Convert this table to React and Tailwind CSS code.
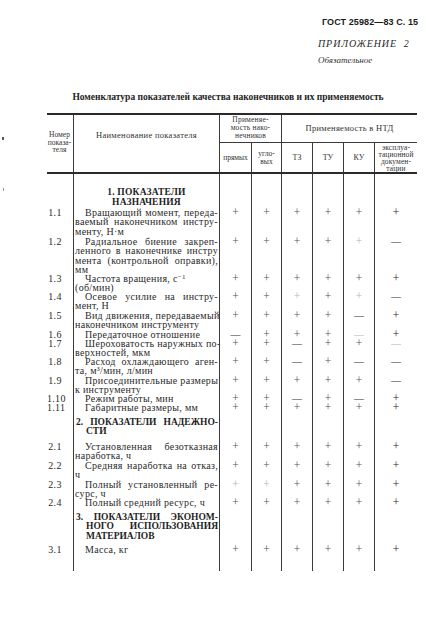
const GRID = 'grid grid-cols-[26px_146px_32px_30px_31px_31px_31px_43px]'

// marks: '+' plus, '-' dash, 'p' faint plus, 'q' faint dash
// nj: index of a line that is not justified although it is not the last one
const ROWS = [
  { sec: 'center', h: 'h-[34px]', pt: 'pt-[13px]', lines: ['1. ПОКАЗАТЕЛИ', 'НАЗНАЧЕНИЯ'] },
  { n: '1.1', h: 'h-[29px]', m: '++++++', lines: ['Вращающий момент, переда-', 'ваемый наконечником инстру-', 'менту, Н·м'] },
  { n: '1.2', h: 'h-[37px]', m: '++++p-', lines: ['Радиальное биение закреп-', 'ленного в наконечнике инстру', 'мента (контрольной оправки),', 'мм'] },
  { n: '1.3', h: 'h-[18px]', m: '++++++', nj: 0, lines: [<>Частота вращения, с<span className="relative -top-[3px] text-[7px] leading-[0px]">−1</span></>, '(об/мин)'] },
  { n: '1.4', h: 'h-[19px]', m: '++p+p-', lines: ['Осевое усилие на инстру-', 'мент, Н'] },
  { n: '1.5', h: 'h-[19px]', m: '++++-+', lines: ['Вид движения, передаваемый', 'наконечником инструменту'] },
  { n: '1.6', h: 'h-[9px]', m: '-+++q+', lines: ['Передаточное отношение'] },
  { n: '1.7', h: 'h-[18px]', m: '++-++q', lines: ['Шероховатость наружных по-', 'верхностей, мкм'] },
  { n: '1.8', h: 'h-[19px]', m: '++-+--', lines: ['Расход охлаждающего аген-', 'та, м³/мин, л/мин'] },
  { n: '1.9', h: 'h-[18px]', m: '+++++-', lines: ['Присоединительные размеры', 'к инструменту'] },
  { n: '1.10', h: 'h-[9px]', m: '++-+-+', lines: ['Режим работы, мин'] },
  { n: '1.11', h: 'h-[14px]', m: '++++++', lines: ['Габаритные размеры, мм'] },
  { sec: 'left', h: 'h-[25px]', pt: 'pt-[1px]', lines: ['2. ПОКАЗАТЕЛИ НАДЕЖНО-', 'СТИ'] },
  { n: '2.1', h: 'h-[19px]', m: '++++++', lines: ['Установленная безотказная', 'наработка, ч'] },
  { n: '2.2', h: 'h-[19px]', m: '++++++', lines: ['Средняя наработка на отказ,', 'ч'] },
  { n: '2.3', h: 'h-[18px]', m: 'pp++++', lines: ['Полный установленный ре-', 'сурс, ч'] },
  { n: '2.4', h: 'h-[14px]', m: '++++++', lines: ['Полный средний ресурс, ч'] },
  { sec: 'left', h: 'h-[33px]', pt: 'pt-[1px]', lines: ['3. ПОКАЗАТЕЛИ ЭКОНОМ-', 'НОГО ИСПОЛЬЗОВАНИЯ', 'МАТЕРИАЛОВ'] },
  { n: '3.1', h: 'h-[26px]', m: '++++++', lines: ['Масса, кг'] },
]

function Mark({ c, last }) {
  if (c === '+' || c === 'p') {
    return (
      <span className={`text-[11.5px] leading-[9px] ${c === 'p' ? 'text-[#b5b5b5]' : last ? 'text-[#222]' : 'text-[#555]'}`}>+</span>
    )
  }
  return (
    <span className={`text-[10px] leading-[9px] ${c === 'q' ? 'text-[#b5b5b5]' : 'text-[#333]'}`}>—</span>
  )
}

function NameCell({ row }) {
  const { lines, sec } = row
  if (sec === 'center') {
    return (
      <div className={`border-l border-[#3a3a3a] ${row.pt} text-center font-bold text-[9.5px] leading-[10px] tracking-[0.2px] text-[#1e1e1e]`}>
        {lines.map((l, i) => <div key={i}>{l}</div>)}
      </div>
    )
  }
  if (sec === 'left') {
    return (
      <div className={`border-l border-[#3a3a3a] ${row.pt} pl-[2px] pr-[1px] font-bold text-[9.5px] leading-[9.3px] text-[#1e1e1e]`}>
        {lines.map((l, i) => {
          const last = i === lines.length - 1
          return (
            <div key={i} className={`whitespace-nowrap ${i > 0 ? 'pl-[10px]' : ''} ${last ? 'text-left' : 'text-justify [text-align-last:justify]'}`}>{l}</div>
          )
        })}
      </div>
    )
  }
  return (
    <div className="border-l border-[#3a3a3a] pl-[1px] pr-[1px] text-[10px] leading-[9.3px] tracking-[0.3px] text-[#2a2a2a]">
      {lines.map((l, i) => {
        const plain = i === lines.length - 1 || i === row.nj
        return (
          <div key={i} className={`whitespace-nowrap ${i === 0 ? 'pl-[10px]' : ''} ${plain ? 'text-left' : 'text-justify [text-align-last:justify]'}`}>{l}</div>
        )
      })}
    </div>
  )
}

function BodyRow({ row }) {
  const marks = row.m ? row.m.split('') : ['', '', '', '', '', '']
  return (
    <div className={`${GRID} ${row.h}`}>
      <div className="pr-[10px] text-center text-[10px] leading-[9.3px] tracking-[0.3px] text-[#2a2a2a]">{row.n}</div>
      <NameCell row={row} />
      {marks.map((c, i) => (
        <div key={i} className="border-l border-[#3a3a3a] flex justify-center items-start h-full">
          {c && <Mark c={c} last={i === 5} />}
        </div>
      ))}
    </div>
  )
}

export default function App() {
  return (
    <div className="relative w-[427px] h-[631px] bg-white overflow-hidden font-['Liberation_Serif',serif] text-[#222]">
      {/* scan specks at left margin */}
      <span className="absolute left-[2px] top-[137px] w-[2px] h-[3px] bg-[#555]" />
      <span className="absolute left-[3px] top-[188px] w-[1px] h-[3px] bg-[#999]" />

      <div className="ml-[318px] pt-[16px]">
        <div className="pl-[4px] font-['Liberation_Sans',sans-serif] font-bold text-[9px] leading-[12px] tracking-[0.1px] text-[#1a1a1a] whitespace-nowrap">
          ГОСТ 25982—83 С. 15
        </div>
        <div className="mt-[10px] italic text-[10px] leading-[12px] tracking-[0.9px] text-[#2a2a2a] whitespace-nowrap">
          ПРИЛОЖЕНИЕ&nbsp; 2
        </div>
        <div className="mt-[4px] italic text-[9px] leading-[12px] text-[#333]">Обязательное</div>
      </div>

      <div className="ml-[47px] w-[370px]">
        <div className="mt-[25px] pr-[8px] text-center font-bold text-[9.5px] leading-[12px] text-[#1e1e1e] whitespace-nowrap">
          Номенклатура показателей качества наконечников и их применяемость
        </div>

        {/* header */}
        <div className={`${GRID} grid-rows-[28px_29px] mt-[10px] border-t-2 border-b-2 border-[#2a2a2a] text-[#333]`}>
          <div className="row-span-2 pt-[16px] pr-[1px] text-center text-[7.5px] leading-[7.5px]">
            Номер<br />показа-<br />теля
          </div>
          <div className="row-span-2 border-l border-[#3a3a3a] pt-[16px] text-center text-[8.5px] leading-[9px] tracking-[0.3px]">
            Наименование показателя
          </div>
          <div className="col-span-2 border-l border-b border-[#3a3a3a] pt-[1px] text-center text-[7.5px] leading-[8px] tracking-[0.2px]">
            Применяе-<br />мость нако-<br />нечников
          </div>
          <div className="col-span-4 border-l border-b border-[#3a3a3a] pt-[9px] text-center text-[8.5px] leading-[9px] tracking-[0.3px]">
            Применяемость в НТД
          </div>
          <div className="border-l border-[#3a3a3a] flex items-center justify-center text-[7.5px] leading-[8px]">прямых</div>
          <div className="border-l border-[#3a3a3a] flex items-center justify-center text-center text-[7.5px] leading-[8px]">угло-<br />вых</div>
          <div className="border-l border-[#3a3a3a] flex items-center justify-center text-[8px]">ТЗ</div>
          <div className="border-l border-[#3a3a3a] flex items-center justify-center text-[8px]">ТУ</div>
          <div className="border-l border-[#3a3a3a] flex items-center justify-center text-[8px]">КУ</div>
          <div className="border-l border-[#3a3a3a] flex items-center justify-center text-center text-[7.5px] leading-[7px] tracking-[0.1px]">
            эксплуа-<br />тационной<br />докумен-<br />тации
          </div>
        </div>

        {/* body */}
        <div>
          {ROWS.map((r, i) => <BodyRow key={i} row={r} />)}
        </div>
      </div>
    </div>
  )
}
